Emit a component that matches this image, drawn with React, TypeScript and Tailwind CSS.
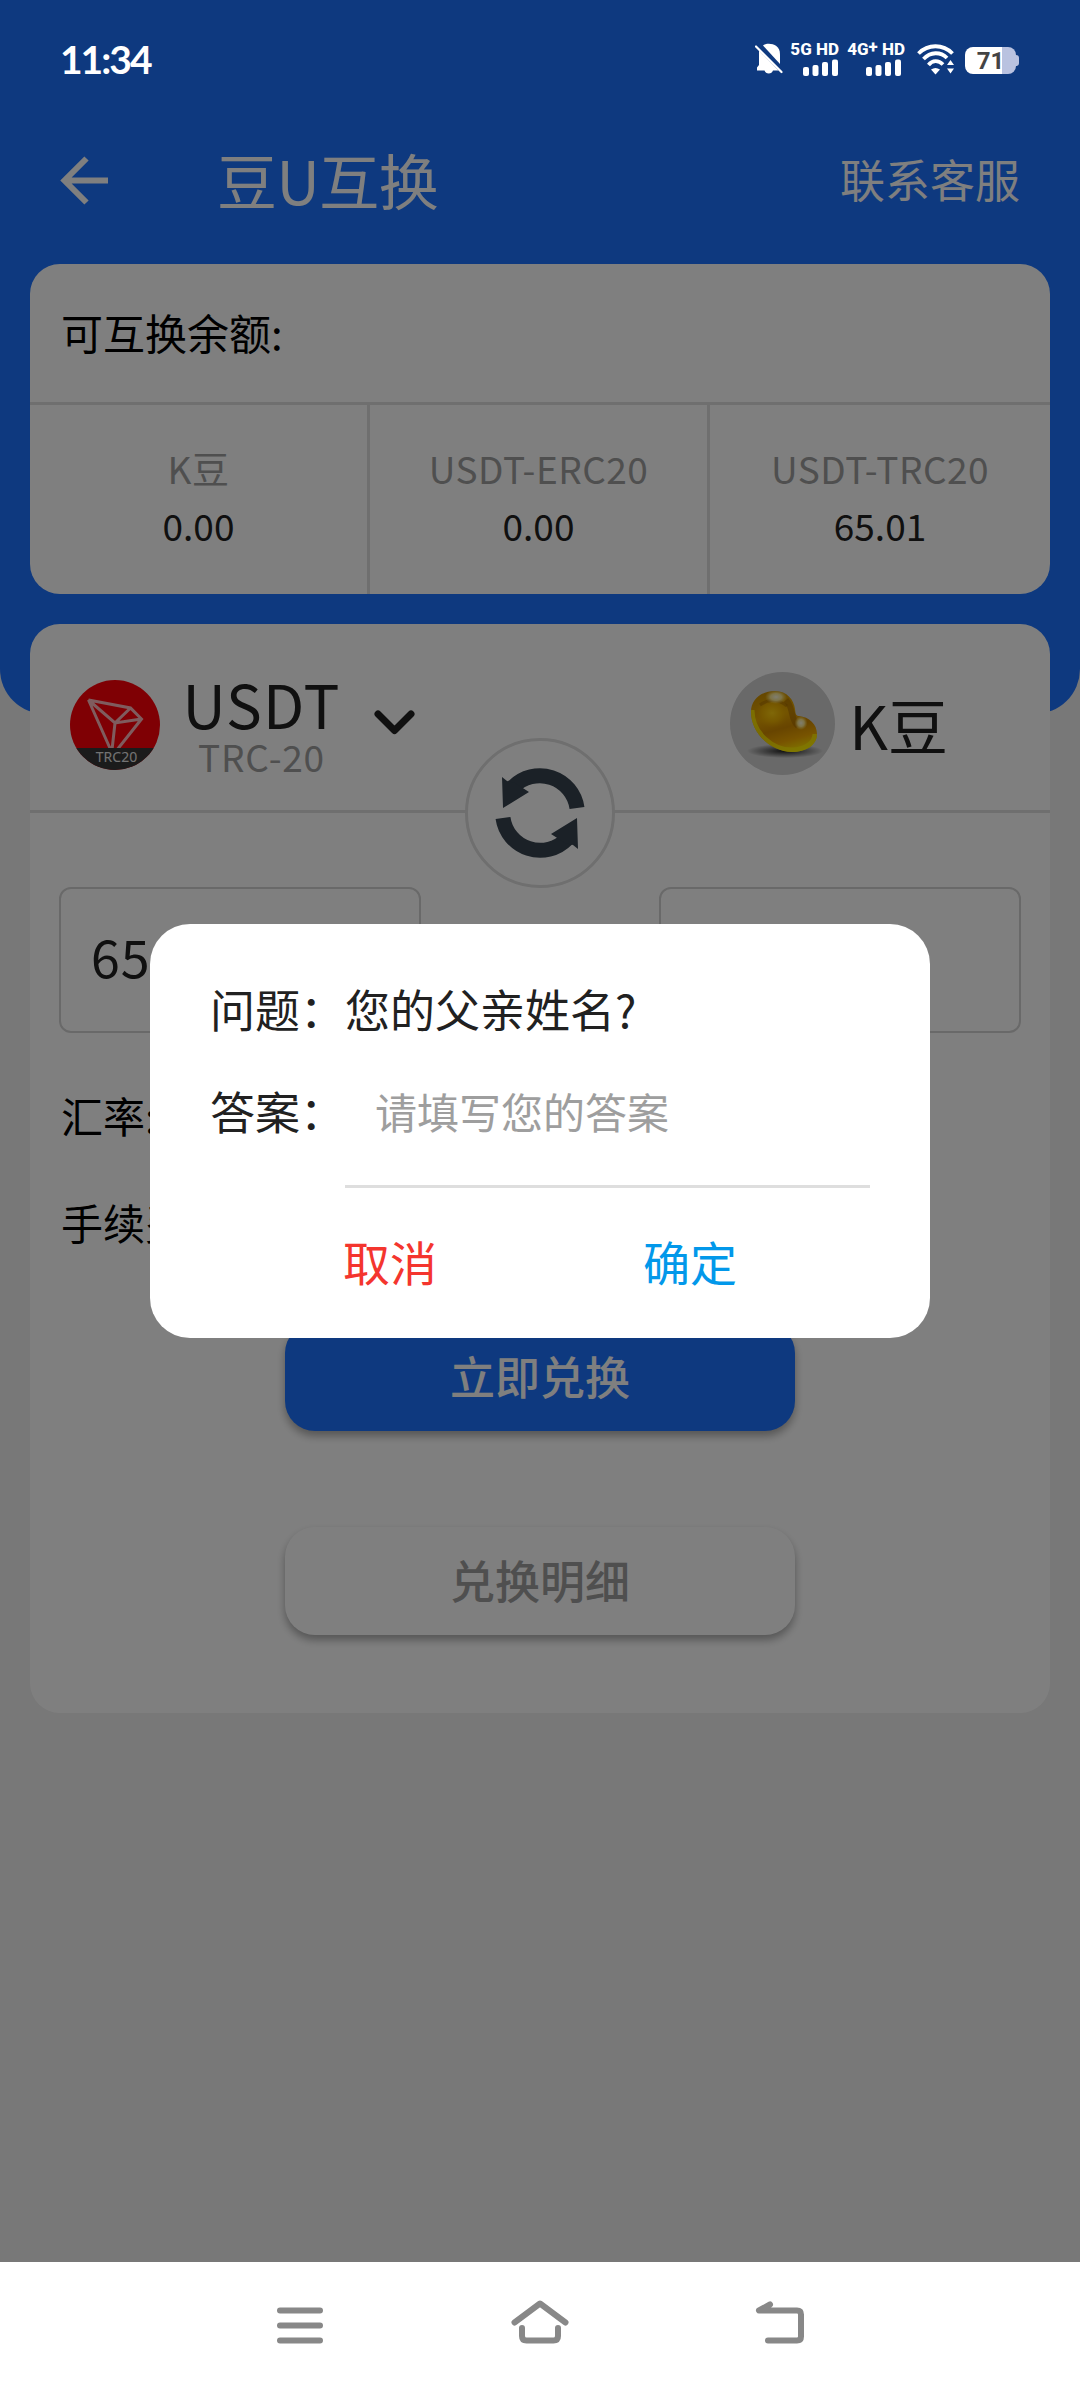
import React from 'react';

const balances = [
  { label: 'K豆', value: '0.00' },
  { label: 'USDT-ERC20', value: '0.00' },
  { label: 'USDT-TRC20', value: '65.01' },
];

const SignalBars: React.FC = () => (
  <svg width="36" height="17" viewBox="0 0 36 17" fill="#fff">
    <rect x="0" y="8" width="6" height="9" rx="2" />
    <rect x="9.5" y="6" width="6" height="11" rx="2" />
    <rect x="19" y="3" width="6" height="14" rx="2" />
    <rect x="29" y="0.5" width="6" height="16.5" rx="2" />
  </svg>
);

interface NetworkProps {
  label: React.ReactNode;
  className?: string;
}

const Network: React.FC<NetworkProps> = ({ label, className = '' }) => (
  <div className={`flex h-[34px] flex-col items-end justify-between whitespace-nowrap font-['Roboto','Liberation_Sans',sans-serif] text-[17px] leading-[15px] font-extrabold ${className}`}>
    <span>{label}</span>
    <SignalBars />
  </div>
);

const StatusBar: React.FC = () => (
  <div className="absolute inset-x-0 top-0 flex h-[118px] items-center justify-between pr-[61px] pl-[60px] text-white">
    <span className="font-['Lato','Noto_Sans',sans-serif] text-[39px] leading-none font-bold tracking-[-2px]">11:34</span>
    <div className="flex items-center">
      <svg width="28" height="32" viewBox="0 0 28 32" fill="#fff">
        <path d="M8 2.500C11-.3 25-.8 25 11.500V21L8 2.500Z" />
        <path d="M4 7.500L23.500 27.500H18a4.500 4.500 0 0 1-8.500 0H2V24.500L4 22Z" />
        <path d="M1 3.500L26.500 29" stroke="#fff" strokeWidth="2.200" strokeLinecap="round" />
      </svg>
      <Network className="ml-2 w-[48px]" label="5G HD" />
      <Network
        className="ml-[10px] w-[56px] pr-[3px]"
        label={<span className="-mr-[3px]">4G<span className="relative -top-[3px]">+</span> HD</span>}
      />
      <svg className="ml-[12px]" width="38" height="31" viewBox="0 0 38 31" fill="none" stroke="#fff" strokeWidth="3.800">
        <path d="M1.500 9.500C11-.2 26-.2 35.500 9.500" />
        <path d="M6.500 15C13.500 7.500 23.500 7.500 30 14" />
        <path d="M11.500 21C15.500 16 21.500 16 26 20.500" />
        <path d="M14 25.500Q18.500 22.500 23 25.500L18.500 30.500Z" fill="#fff" stroke="none" />
        <path d="M30 21L33.500 16L37 21ZM30 24.500L33.500 29.500L37 24.500Z" fill="#fff" stroke="none" />
      </svg>
      <div className="mt-[3px] ml-[10px] flex items-center">
        <div className="flex h-[27px] w-[51px] items-center justify-center rounded-[8px] bg-linear-to-r from-white from-72% to-[#b9c2e0] to-72% font-['Roboto','Liberation_Sans',sans-serif] text-[24px] leading-none font-bold text-[#444]">
          71
        </div>
        <div className="h-[11px] w-[3px] rounded-r-[3px] bg-[#b9c2e0]" />
      </div>
    </div>
  </div>
);

const TronIcon: React.FC = () => (
  <svg width="90" height="90" viewBox="0 0 90 90">
    <defs>
      <clipPath id="tron-clip">
        <circle cx="45" cy="45" r="45" />
      </clipPath>
    </defs>
    <g clipPath="url(#tron-clip)">
      <rect width="90" height="90" fill="#ff0008" />
      <path
        d="M18.500 20L60.500 28L71.500 39L43 75L18.500 20L45 43L71.500 39M60.500 28L45 43L42 70"
        fill="none"
        stroke="#ffb9bd"
        strokeWidth="3"
        strokeLinejoin="miter"
      />
      <rect y="68" width="90" height="22" fill="#363636" />
      <text x="46.500" y="82" fill="#e6e6e6" fontSize="14" textAnchor="middle" fontFamily="Noto Sans, sans-serif">
        TRC20
      </text>
    </g>
  </svg>
);

const BeanIcon: React.FC = () => (
  <svg width="105" height="103" viewBox="0 0 105 103">
    <defs>
      <linearGradient id="bean-body" x1="0.25" y1="0" x2="0.55" y2="1">
        <stop offset="0" stopColor="#c98d00" />
        <stop offset="0.400" stopColor="#e8a800" />
        <stop offset="0.620" stopColor="#d08a00" />
        <stop offset="0.820" stopColor="#f0a800" />
        <stop offset="1" stopColor="#ffe600" />
      </linearGradient>
      <radialGradient id="bean-glow">
        <stop offset="0" stopColor="#ffcf10" />
        <stop offset="0.600" stopColor="#eeb200" stopOpacity="0.850" />
        <stop offset="1" stopColor="#e0a000" stopOpacity="0" />
      </radialGradient>
      <radialGradient id="bean-shadow">
        <stop offset="0" stopColor="#000" stopOpacity="0.850" />
        <stop offset="1" stopColor="#000" stopOpacity="0" />
      </radialGradient>
      <radialGradient id="bean-shine">
        <stop offset="0" stopColor="#fffbe0" />
        <stop offset="0.500" stopColor="#fff0a0" stopOpacity="0.900" />
        <stop offset="1" stopColor="#ffe060" stopOpacity="0" />
      </radialGradient>
      <clipPath id="bean-clip">
        <path d="M21 40C21 27 32 19 45 19C57 19 64 28 65 37C65.500 42 66 44 69 44C79 45 87 52 87 62C87 73 76 80 62 80C42 80 21 62 21 40Z" />
      </clipPath>
    </defs>
    <ellipse cx="52.500" cy="51.500" rx="52.500" ry="51.500" fill="#d2d2d2" />
    <ellipse cx="55" cy="79" rx="38" ry="7" fill="url(#bean-shadow)" />
    <g clipPath="url(#bean-clip)">
      <rect x="20" y="18" width="68" height="63" fill="url(#bean-body)" />
      <path d="M21 38C21 62 42 79 62 79C76 79 86 71 86 62" fill="none" stroke="#fff000" strokeWidth="7" opacity="0.750" />
      <path d="M56 28C64 36 60 47 68 54" fill="none" stroke="#a66a00" strokeWidth="6" opacity="0.550" />
      <ellipse cx="42" cy="41" rx="17" ry="15" fill="url(#bean-glow)" />
      <path d="M30 33Q43 23 57 34" fill="none" stroke="#a66a00" strokeWidth="3" opacity="0.500" />
      <ellipse cx="46" cy="25" rx="11" ry="7" fill="url(#bean-shine)" />
      <ellipse cx="71" cy="51" rx="6.500" ry="7" fill="url(#bean-shine)" />
    </g>
  </svg>
);

const SwapIcon: React.FC = () => (
  <svg width="90" height="90" viewBox="0 0 90 90">
    <g id="swap-half">
      <path d="M82 40A37.500 37.500 0 0 0 18 19" fill="none" stroke="#36424e" strokeWidth="15" />
      <path d="M7 9L8 40L34 24L20 15L12 13Z" fill="#36424e" />
    </g>
    <use href="#swap-half" transform="rotate(180 45 45)" />
  </svg>
);

const BalanceCard: React.FC = () => (
  <section className="h-[330px] overflow-hidden rounded-[30px] bg-white">
    <div className="flex h-[141px] items-center border-b-[3px] border-[#dedede] px-[31px] pb-[4px] text-[42px] text-black">
      可互换余额:
    </div>
    <div className="grid h-[189px] grid-cols-3 divide-x-[3px] divide-[#dedede]">
      {balances.map((item) => (
        <div key={item.label} className="flex flex-col items-center pt-[35px] text-[37px] leading-[57px]">
          <span className="tracking-[0.5px] text-[#9e9e9e]">{item.label}</span>
          <span className="text-[#212121]">{item.value}</span>
        </div>
      ))}
    </div>
  </section>
);

const ExchangeCard: React.FC = () => (
  <section className="relative mt-[30px] flex h-[1089px] flex-col rounded-[30px] bg-white text-[#212121]">
    <div className="flex h-[189px] shrink-0 items-start justify-between border-b-[3px] border-[#dedede] pr-[102px] pl-10">
      <div className="flex pt-[44px]">
        <div className="pt-3">
          <TronIcon />
        </div>
        <div className="ml-5 flex w-[163px] flex-col items-center pt-[8px]">
          <span className="text-[60px] leading-[54px] tracking-[1px]">USDT</span>
          <span className="text-[37px] leading-[52px] tracking-[0.8px] text-[#9e9e9e]">TRC-20</span>
        </div>
        <svg className="mt-[42px] ml-[31px]" width="41" height="25" viewBox="0 0 41 25" fill="none" stroke="#212121" strokeWidth="7" strokeLinecap="round" strokeLinejoin="round">
          <path d="M4 4L20.500 20.500L37 4" />
        </svg>
      </div>
      <div className="flex items-center pt-12">
        <BeanIcon />
        <span className="ml-[14px] text-[60px] leading-[60px]">K豆</span>
      </div>
    </div>
    <div className="absolute top-[114px] left-[435px] flex size-[150px] items-center justify-center rounded-full border-[3px] border-[#dedede] bg-white">
      <SwapIcon />
    </div>

    <div className="mt-[74px] flex justify-between px-[29px] text-[52px]">
      <div className="flex h-[146px] w-[362px] items-center rounded-[12px] border-2 border-[#d2d2d2] px-[30px] pb-[8px] tracking-[1px]">
        65.01
      </div>
      <div className="h-[146px] w-[362px] rounded-[12px] border-2 border-[#d2d2d2]" />
    </div>

    <div className="mt-[52px] flex flex-col gap-[47px] px-[31px] text-[42px] leading-[60px] text-black">
      <span>汇率:</span>
      <span>手续费:</span>
    </div>

    <div className="mt-[71px] flex flex-col items-center gap-[96px] text-[45px] font-medium">
      <button className="h-[108px] w-[510px] rounded-[30px] bg-[#1c72ff] pb-[3px] text-white shadow-[0_5px_8px_rgba(0,0,0,0.33)]">立即兑换</button>
      <button className="h-[108px] w-[510px] rounded-[30px] bg-white pb-[3px] text-[#9e9e9e] shadow-[0_5px_8px_rgba(0,0,0,0.33)]">兑换明细</button>
    </div>
  </section>
);

const SecurityDialog: React.FC = () => (
  <div className="h-[414px] w-[780px] rounded-[40px] bg-white px-[60px] pt-[55px] text-[45px] leading-[60px] text-[#212121]">
    <div className="flex">
      <span className="w-[135px]">问题：</span>
      <span>您的父亲姓名?</span>
    </div>
    <div className="mt-[42px] flex">
      <span className="w-[135px]">答案：</span>
      <div className="h-[107px] flex-1 border-b-[3px] border-[#dedede] pl-[30px] text-[42px] text-[#9e9e9e]">请填写您的答案</div>
    </div>
    <div className="mt-[43px] flex text-[47px]">
      <button className="ml-[133px] text-[#f4352e]">取消</button>
      <button className="ml-[206px] text-[#0298ea]">确定</button>
    </div>
  </div>
);

const NavBar: React.FC = () => (
  <nav className="flex h-[126px] items-center justify-center gap-[180px] bg-white pb-[3px]">
    <svg width="60" height="60" viewBox="0 0 60 60" fill="none" stroke="#888" strokeWidth="6" strokeLinecap="round">
      <path d="M10 16.500H50M10 31.500H50M10 46.500H50" />
    </svg>
    <svg width="60" height="60" viewBox="0 0 60 60" fill="none" stroke="#888" strokeWidth="6" strokeLinecap="round" strokeLinejoin="round">
      <path d="M4.500 28.500L30 9.500L55.500 28.500" />
      <path d="M12 34V42Q12 46.500 16.500 46.500H43.500Q48 46.500 48 42V34" />
    </svg>
    <svg width="60" height="60" viewBox="0 0 60 60" fill="none" stroke="#888" strokeWidth="6" strokeLinecap="round" strokeLinejoin="round">
      <path d="M20 10.500L9 16.500H47Q51 16.500 51 20.500V42.500Q51 46.500 47 46.500H18" />
    </svg>
  </nav>
);

export default function App() {
  return (
    <div className="flex h-[2388px] w-[1080px] flex-col overflow-hidden bg-[#f0f0f0] font-['Noto_Sans_CJK_SC',sans-serif]">
      <div className="relative h-[2262px] overflow-hidden">
        <div className="h-[714px] rounded-b-[45px] bg-[#1c72ff] pt-[120px]">
          <header className="flex h-[144px] items-center pr-[60px] pb-6 pl-[60px] text-white">
            <svg width="49" height="49" viewBox="0 0 49 49" fill="none" stroke="#fff" strokeWidth="6">
              <path d="M48 24.500H5M26.500 2.500L4.500 24.500L26.500 46.500" />
            </svg>
            <h1 className="-mt-[2px] ml-[108px] text-[60px] leading-none tracking-[-0.5px]">豆U互换</h1>
            <span className="-mt-[4px] ml-auto text-[45px] leading-none">联系客服</span>
          </header>
          <main className="px-[30px]">
            <BalanceCard />
            <ExchangeCard />
          </main>
        </div>

        <div className="absolute inset-0 flex items-center justify-center bg-black/50">
          <SecurityDialog />
        </div>
        <StatusBar />
      </div>
      <NavBar />
    </div>
  );
}
